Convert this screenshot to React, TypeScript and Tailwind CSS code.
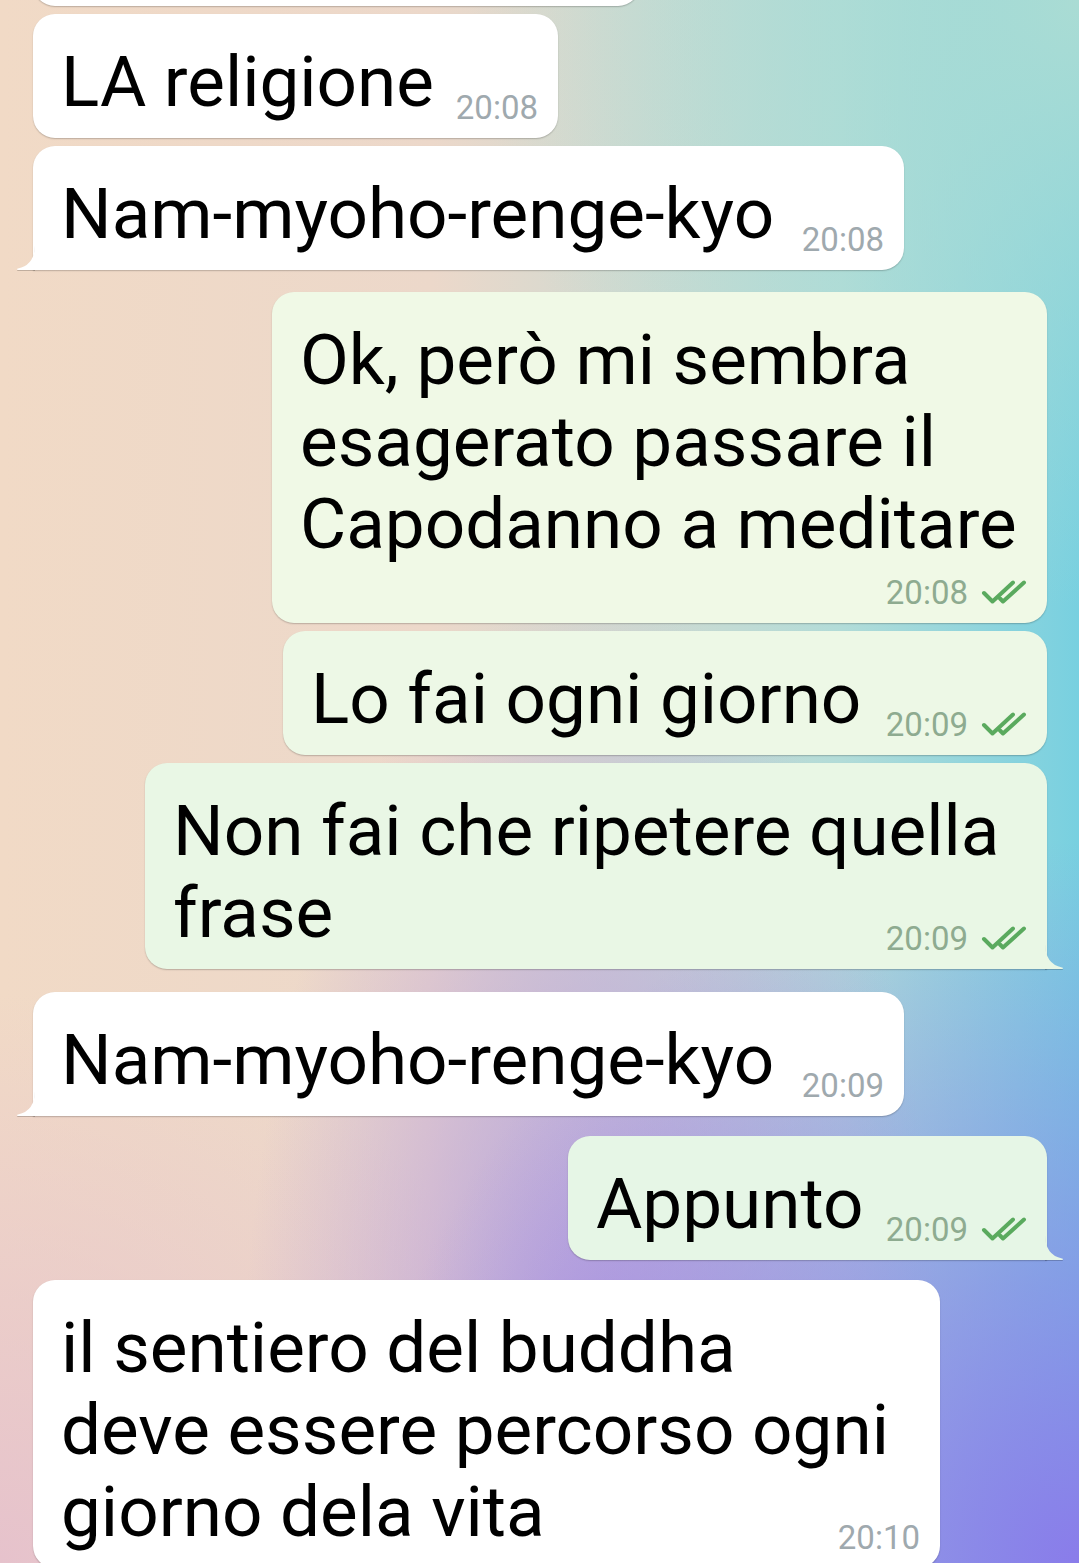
import React from "react";

type Msg = {
  id: number;
  out: boolean;
  lines: string[];
  time: string;
  // inline: ora sull'ultima riga, below: ora su una riga a parte
  mode: "inline" | "below";
  width: string;
  mt: string;
  bg?: string;
  tail?: boolean;
};

const messages: Msg[] = [
  { id: 1, out: false, lines: ["LA religione"], time: "20:08", mode: "inline", width: "w-[525px]", mt: "mt-[8px]" },
  { id: 2, out: false, lines: ["Nam-myoho-renge-kyo"], time: "20:08", mode: "inline", width: "w-[871px]", mt: "mt-[8px]", tail: true },
  {
    id: 3,
    out: true,
    lines: ["Ok, però mi sembra", "esagerato passare il", "Capodanno a meditare"],
    time: "20:08",
    mode: "below",
    width: "w-[775px]",
    mt: "mt-[22px]",
    bg: "bg-[#f0f9e6]",
  },
  { id: 4, out: true, lines: ["Lo fai ogni giorno"], time: "20:09", mode: "inline", width: "w-[764px]", mt: "mt-[8px]", bg: "bg-[#edf8e6]" },
  {
    id: 5,
    out: true,
    lines: ["Non fai che ripetere quella", "frase"],
    time: "20:09",
    mode: "inline",
    width: "w-[902px]",
    mt: "mt-[8px]",
    bg: "bg-[#e9f7e5]",
    tail: true,
  },
  { id: 6, out: false, lines: ["Nam-myoho-renge-kyo"], time: "20:09", mode: "inline", width: "w-[871px]", mt: "mt-[23px]", tail: true },
  { id: 7, out: true, lines: ["Appunto"], time: "20:09", mode: "inline", width: "w-[479px]", mt: "mt-[20px]", bg: "bg-[#e6f6e6]", tail: true },
  {
    id: 8,
    out: false,
    lines: ["il sentiero del buddha", "deve essere percorso ogni", "giorno dela vita"],
    time: "20:10",
    mode: "inline",
    width: "w-[907px]",
    mt: "mt-[20px]",
  },
];

function DoubleCheck() {
  return (
    <svg width="46" height="24" viewBox="0 0 46 24" fill="none" className="ml-[13px]">
      <path d="M3 13 L11.5 21.5 L32 2.5" stroke="#5aaa5e" strokeWidth="4" strokeLinecap="round" strokeLinejoin="round" />
      <path d="M19 18.5 L22 21.5 L43 2.5" stroke="#5aaa5e" strokeWidth="4" strokeLinecap="round" strokeLinejoin="round" />
    </svg>
  );
}

function Tail({ out, fill }: { out: boolean; fill: string }) {
  if (out) {
    return (
      <svg
        width="19"
        height="26"
        viewBox="0 0 19 26"
        className="absolute bottom-0 right-[-17px] drop-shadow-[0_1px_0.5px_rgba(0,0,0,0.2)]"
      >
        <path d="M0 0 Q0 21 17 24.5 Q19 25 17 26 L0 26 Z" fill={fill} />
      </svg>
    );
  }
  return (
    <svg
      width="19"
      height="26"
      viewBox="0 0 19 26"
      className="absolute bottom-0 left-[-17px] drop-shadow-[0_1px_0.5px_rgba(0,0,0,0.2)]"
    >
      <path d="M19 0 Q19 21 2 24.5 Q0 25 2 26 L19 26 Z" fill={fill} />
    </svg>
  );
}

function Bubble({ m }: { m: Msg }) {
  const bg = m.out ? m.bg ?? "bg-[#edf8e6]" : "bg-white";
  const fill = m.out ? (m.bg ?? "bg-[#edf8e6]").slice(4, -1) : "#ffffff";
  const corner = m.tail ? (m.out ? "rounded-br-none" : "rounded-bl-none") : "";

  return (
    <div className={`flex ${m.out ? "justify-end pr-[32px]" : "justify-start pl-[33px]"} ${m.mt}`}>
      <div
        className={`relative ${m.width} ${bg} ${corner} rounded-[22px] pl-[28px] pr-5 pt-[27px] pb-[15px] shadow-[0_1px_1.5px_rgba(0,0,0,0.22)] flex flex-col`}
      >
        <div className="text-[71px] leading-[82px] text-black whitespace-nowrap">
          {m.lines.map((l, i) => (
            <div key={i}>{l}</div>
          ))}
        </div>
        <div
          className={`flex items-center justify-end h-[32px] ${m.mode === "inline" ? "-mt-[32px]" : "mt-[11px]"}`}
        >
          <span className={`text-[33px] leading-none ${m.out ? "text-[#8eab90]" : "text-[#9fa9ae]"}`}>{m.time}</span>
          {m.out && <DoubleCheck />}
        </div>
        {m.tail && <Tail out={m.out} fill={fill} />}
      </div>
    </div>
  );
}

export default function App() {
  return (
    <div
      className="w-[1079px] h-[1563px] overflow-hidden flex flex-col font-['Roboto',_'Liberation_Sans',_sans-serif] bg-[radial-gradient(circle_at_100%_100%,#8a7cea_0%,rgba(138,124,234,0)_38%),radial-gradient(ellipse_at_55%_92%,#b59ade_0%,rgba(181,154,222,0)_42%),radial-gradient(circle_at_0%_100%,#e6c2cc_0%,rgba(230,194,204,0)_30%),radial-gradient(circle_at_100%_0%,#aadcd4_0%,rgba(170,220,212,0)_32%),linear-gradient(to_right,#f1dac6_0%,#ecd8ca_40%,#b2dcd8_78%,#78d0e0_100%)]"
    >
      {/* bolla tagliata in alto */}
      <div className="flex justify-start pl-[33px] -mt-[118px]">
        <div className="w-[607px] h-[124px] bg-white rounded-[22px] shadow-[0_1px_1.5px_rgba(0,0,0,0.22)]" />
      </div>
      {messages.map((m) => (
        <Bubble key={m.id} m={m} />
      ))}
    </div>
  );
}
